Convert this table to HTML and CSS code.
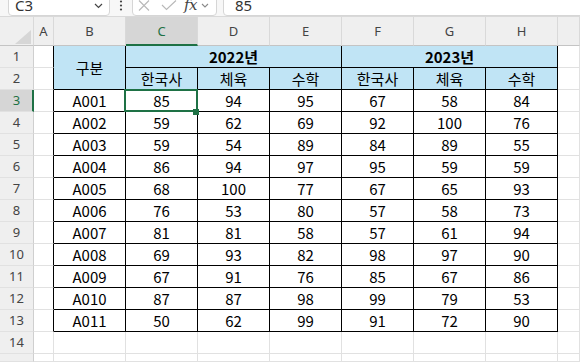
FILE: index.html
```html
<!DOCTYPE html>
<html lang="ko">
<head>
<meta charset="utf-8">
<link rel="stylesheet" href="styles.css">
</head>
<body>
<div class="app">
  <div class="fbar">
    <div class="box namebox">
      <span class="ref txt">C3</span>
      <svg class="chev" width="9" height="6" viewBox="0 0 9 6"><polyline points="1,1 4.5,4.5 8,1" fill="none" stroke="#444" stroke-width="1.2"/></svg>
    </div>
    <div class="dots">
      <svg width="4" height="12" viewBox="0 0 4 12"><circle cx="2" cy="1.5" r="1.1" fill="#444"/><circle cx="2" cy="5.5" r="1.1" fill="#444"/><circle cx="2" cy="9.5" r="1.1" fill="#444"/></svg>
    </div>
    <div class="box fxbox">
      <svg class="ico" width="12" height="11" viewBox="0 0 12 11"><path d="M1 0.5 L11 10.5 M11 0.5 L1 10.5" stroke="#b8b8b8" stroke-width="1.1" fill="none"/></svg>
      <svg class="ico chk" width="16" height="11" viewBox="0 0 16 11"><polyline points="1,5 5.5,9.5 15,0.5" stroke="#b8b8b8" stroke-width="1.1" fill="none"/></svg>
      <span class="fx txt">fx</span>
      <svg class="chev2" width="8" height="5" viewBox="0 0 8 5"><polyline points="1,1 4,4 7,1" fill="none" stroke="#8a8a8a" stroke-width="1.1"/></svg>
    </div>
    <div class="box formula"><span class="txt">85</span></div>
  </div>

  <div class="sheet">
    <!-- column header row -->
    <div class="c ch corner"><svg class="tri" width="16" height="14" viewBox="0 0 16 14"><polygon points="16,0 16,14 0,14" fill="#d6d6d6"/></svg></div>
    <div class="c ch">A</div>
    <div class="c ch">B</div>
    <div class="c ch sel">C</div>
    <div class="c ch">D</div>
    <div class="c ch">E</div>
    <div class="c ch">F</div>
    <div class="c ch">G</div>
    <div class="c ch">H</div>
    <div class="c ch"></div>

    <!-- row 1 -->
    <div class="c rh">1</div>
    <div class="c edge"></div>
    <div class="c t h span2r">구분</div>
    <div class="c t h b span3c">2022년</div>
    <div class="c t h b span3c">2023년</div>
    <div class="c"></div>

    <!-- row 2 -->
    <div class="c rh">2</div>
    <div class="c edge"></div>
    <div class="c t h">한국사</div>
    <div class="c t h">체육</div>
    <div class="c t h">수학</div>
    <div class="c t h">한국사</div>
    <div class="c t h">체육</div>
    <div class="c t h">수학</div>
    <div class="c"></div>

    <!-- row 3 -->
    <div class="c rh rsel">3</div>
    <div class="c edge"></div>
    <div class="c t">A001</div>
    <div class="c t cur">85<div class="selbox"><div class="handle"></div></div></div>
    <div class="c t">94</div>
    <div class="c t">95</div>
    <div class="c t">67</div>
    <div class="c t">58</div>
    <div class="c t">84</div>
    <div class="c"></div>

    <div class="c rh">4</div><div class="c edge"></div>
    <div class="c t">A002</div><div class="c t">59</div><div class="c t">62</div><div class="c t">69</div><div class="c t">92</div><div class="c t">100</div><div class="c t">76</div><div class="c"></div>

    <div class="c rh">5</div><div class="c edge"></div>
    <div class="c t">A003</div><div class="c t">59</div><div class="c t">54</div><div class="c t">89</div><div class="c t">84</div><div class="c t">89</div><div class="c t">55</div><div class="c"></div>

    <div class="c rh">6</div><div class="c edge"></div>
    <div class="c t">A004</div><div class="c t">86</div><div class="c t">94</div><div class="c t">97</div><div class="c t">95</div><div class="c t">59</div><div class="c t">59</div><div class="c"></div>

    <div class="c rh">7</div><div class="c edge"></div>
    <div class="c t">A005</div><div class="c t">68</div><div class="c t">100</div><div class="c t">77</div><div class="c t">67</div><div class="c t">65</div><div class="c t">93</div><div class="c"></div>

    <div class="c rh">8</div><div class="c edge"></div>
    <div class="c t">A006</div><div class="c t">76</div><div class="c t">53</div><div class="c t">80</div><div class="c t">57</div><div class="c t">58</div><div class="c t">73</div><div class="c"></div>

    <div class="c rh">9</div><div class="c edge"></div>
    <div class="c t">A007</div><div class="c t">81</div><div class="c t">81</div><div class="c t">58</div><div class="c t">57</div><div class="c t">61</div><div class="c t">94</div><div class="c"></div>

    <div class="c rh">10</div><div class="c edge"></div>
    <div class="c t">A008</div><div class="c t">69</div><div class="c t">93</div><div class="c t">82</div><div class="c t">98</div><div class="c t">97</div><div class="c t">90</div><div class="c"></div>

    <div class="c rh">11</div><div class="c edge"></div>
    <div class="c t">A009</div><div class="c t">67</div><div class="c t">91</div><div class="c t">76</div><div class="c t">85</div><div class="c t">67</div><div class="c t">86</div><div class="c"></div>

    <div class="c rh">12</div><div class="c edge"></div>
    <div class="c t">A010</div><div class="c t">87</div><div class="c t">87</div><div class="c t">98</div><div class="c t">99</div><div class="c t">79</div><div class="c t">53</div><div class="c"></div>

    <div class="c rh">13</div><div class="c edge"></div>
    <div class="c t">A011</div><div class="c t">50</div><div class="c t">62</div><div class="c t">99</div><div class="c t">91</div><div class="c t">72</div><div class="c t">90</div><div class="c"></div>

    <div class="c rh">14</div><div class="c"></div>
    <div class="c"></div><div class="c"></div><div class="c"></div><div class="c"></div><div class="c"></div><div class="c"></div><div class="c"></div><div class="c"></div>

    <div class="c rh"></div><div class="c"></div>
    <div class="c"></div><div class="c"></div><div class="c"></div><div class="c"></div><div class="c"></div><div class="c"></div><div class="c"></div><div class="c"></div>
  </div>
</div>
</body>
</html>
```

FILE: styles.css
```css
* { box-sizing: border-box; }
html, body { margin: 0; padding: 0; background: #fff; }
body { width: 580px; height: 362px; overflow: hidden; font-family: "Noto Sans CJK KR", "Noto Sans", sans-serif; }

.app { width: 580px; height: 362px; overflow: hidden; }

.fbar {
  height: 17px;
  background: #f7f7f7;
  border-bottom: 1px solid #d9d9d9;
  display: flex;
  align-items: flex-end;
  overflow: hidden;
}
.box {
  height: 22px;
  flex: none;
  background: #fff;
  border: 1px solid #d6d6d6;
  border-radius: 4px;
  display: flex;
  align-items: flex-start;
  padding-top: 5px;
  color: #333;
  font-family: "Noto Sans", sans-serif;
  font-size: 15px;
}
.txt { display: block; line-height: 11px; height: 11px; }
.namebox { margin-left: 8px; width: 102px; padding-left: 6px; }
.namebox .ref { flex: 1; }
.namebox .chev { margin-right: 6px; margin-top: 3px; }
.dots { width: 22px; flex: none; align-self: stretch; display: flex; justify-content: center; align-items: flex-start; }
.fxbox { width: 85px; padding-left: 5px; }
.fxbox .chk { margin-left: 11px; }
.fxbox .fx { font-family: "DejaVu Serif", "Liberation Serif", serif; font-style: italic; font-size: 15px; color: #444; margin-left: 7px; letter-spacing: -0.5px; }
.fxbox .chev2 { margin-left: 4px; margin-top: 3px; }
.formula { margin-left: 6px; flex: 1; margin-right: -8px; padding-left: 11px; }

.sheet {
  display: grid;
  grid-template-columns: 34px 20px repeat(7, 72px) 1fr;
  grid-template-rows: 29px repeat(14, 22px) 1fr;
  height: 345px;
}
.c {
  border-right: 1px solid #e1e1e1;
  border-bottom: 1px solid #e1e1e1;
  display: flex;
  align-items: center;
  justify-content: center;
  font-size: 15px;
  line-height: 21px;
  color: #000;
  min-width: 0;
}
.ch {
  background: #efefef;
  border-right-color: #d9d9d9;
  border-bottom-color: #c4c4c4;
  font-family: "Noto Sans", sans-serif;
  font-size: 13px;
  color: #444;
  padding-top: 1px;
}
.ch.sel {
  background: #d6d6d6;
  border-bottom: 2px solid #1e7145;
  color: #1e7145;
  padding-top: 2px;
}
.corner { position: relative; }
.corner .tri { position: absolute; right: 2px; bottom: 1px; }
.rh {
  background: #efefef;
  border-right-color: #cfcfcf;
  border-bottom-color: #e1e1e1;
  font-family: "Noto Sans", sans-serif;
  font-size: 13px;
  color: #444;
}
.rh.rsel {
  background: #d6d6d6;
  border-right: 2px solid #1e7145;
  color: #1e7145;
  padding-left: 1px;
}
.edge { border-right-color: #000; }
.t { border-right-color: #000; border-bottom-color: #000; }
.h { background: #c0e4f5; }
.b { font-weight: 700; }
.span2r { grid-row: span 2; }
.span3c { grid-column: span 3; }
.cur { position: relative; }
.selbox {
  position: absolute;
  top: -1px; bottom: -1px; left: -2px; right: -1px;
  border: 2px solid #1e7145;
  z-index: 2;
}
.handle {
  position: absolute;
  left: 67px; top: 18px;
  width: 6px; height: 6px;
  background: #1e7145;
}
```
